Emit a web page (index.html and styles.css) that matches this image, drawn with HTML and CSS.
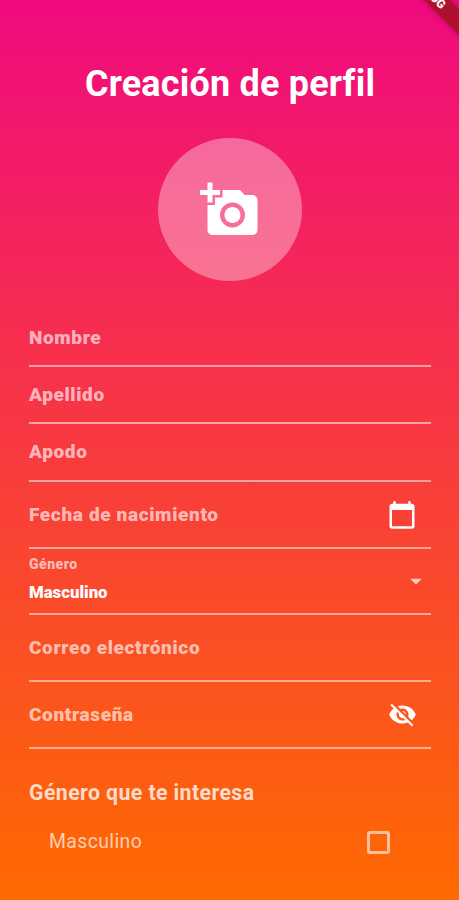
FILE: index.html
```
<!DOCTYPE html>
<html lang="es">
<head>
  <meta charset="UTF-8">
  <meta name="viewport" content="width=device-width, initial-scale=1.0">
  <title>Creación de perfil</title>
  <link rel="stylesheet" href="styles.css">
</head>
<body>
  <div class="banner-corner">
    <div class="debug-banner">DEBUG</div>
  </div>
  <div class="profile-container">
    <h1>Creación de perfil</h1>
    <button type="button" class="photo-button" aria-label="Agregar foto">
      <svg viewBox="0 0 24 24"><path d="M3 4V1h2v3h3v2H5v3H3V6H0V4h3zm3 6V7h3V4h7l1.83 2H21c1.1 0 2 .9 2 2v12c0 1.1-.9 2-2 2H5c-1.1 0-2-.9-2-2V10h3zm7 9c2.76 0 5-2.24 5-5s-2.24-5-5-5-5 2.24-5 5 2.24 5 5 5zm-3.2-5c0 1.77 1.43 3.2 3.2 3.2s3.2-1.43 3.2-3.2-1.43-3.2-3.2-3.2-3.2 1.43-3.2 3.2z"/></svg>
    </button>
    <form class="profile-form">
      <div class="field"><span class="label">Nombre</span></div>
      <div class="field"><span class="label">Apellido</span></div>
      <div class="field"><span class="label">Apodo</span></div>
      <div class="field tall">
        <span class="label">Fecha de nacimiento</span>
        <svg class="icon-calendar" viewBox="0 0 24 24"><path d="M20 3h-1V1h-2v2H7V1H5v2H4c-1.1 0-2 .9-2 2v16c0 1.1.9 2 2 2h16c1.1 0 2-.9 2-2V5c0-1.1-.9-2-2-2zm0 18H4V8h16v13z"/></svg>
      </div>
      <div class="field tall">
        <div class="select">
          <span class="small-label">Género</span>
          <span class="value">Masculino</span>
        </div>
        <svg class="icon-arrow" viewBox="0 0 24 24"><path d="M7 10l5 5 5-5z"/></svg>
      </div>
      <div class="field tall"><span class="label">Correo electrónico</span></div>
      <div class="field tall">
        <span class="label">Contraseña</span>
        <svg class="icon-eye" viewBox="0 0 24 24"><path d="M12 7c2.76 0 5 2.24 5 5 0 .65-.13 1.26-.36 1.83l2.92 2.92c1.51-1.26 2.7-2.89 3.43-4.75-1.73-4.39-6-7.5-11-7.5-1.4 0-2.74.25-3.98.7l2.16 2.16C10.74 7.13 11.35 7 12 7zM2 4.27l2.28 2.28.46.46C3.08 8.3 1.78 10.02 1 12c1.73 4.39 6 7.5 11 7.5 1.55 0 3.03-.3 4.38-.84l.42.42L19.73 22 21 20.73 3.27 3 2 4.27zM7.53 9.8l1.55 1.55c-.05.21-.08.43-.08.65 0 1.66 1.34 3 3 3 .22 0 .44-.03.65-.08l1.55 1.55c-.67.33-1.41.53-2.2.53-2.76 0-5-2.24-5-5 0-.79.2-1.53.53-2.2zm4.31-.78l3.15 3.15.02-.16c0-1.66-1.34-3-3-3l-.17.01z"/></svg>
      </div>
      <h2>Género que te interesa</h2>
      <label class="option">
        <span>Masculino</span>
        <input type="checkbox">
      </label>
    </form>
  </div>
</body>
</html>
```
FILE: styles.css
```
* {
    box-sizing: border-box;
}
body {
    font-family: Roboto, sans-serif;
    margin: 0;
    height: 900px;
    position: relative;
    overflow: hidden;
    color: #fff;
    background: linear-gradient(#f00a7e, #ff6a00);
}
.banner-corner {
    position: absolute;
    top: 0;
    right: 0;
    width: 60px;
    height: 60px;
    overflow: hidden;
}
.debug-banner {
    position: absolute;
    top: -7px;
    right: -40px;
    width: 120px;
    height: 18px;
    padding-right: 25px;
    transform: rotate(45deg);
    background-color: #b01030;
    box-shadow: 0 0 6px rgba(80, 0, 30, 0.4);
    font-size: 12px;
    font-weight: 900;
    line-height: 18px;
    text-align: center;
}
.profile-container {
    display: flex;
    flex-direction: column;
    align-items: center;
    padding: 62px 28px 0 29px;
}
.profile-container h1 {
    margin: 0 0 32px;
    font-size: 36px;
    font-weight: 700;
    font-variant-ligatures: none;
    letter-spacing: 0.2px;
    line-height: 44px;
    white-space: nowrap;
}
.photo-button {
    display: flex;
    align-items: center;
    justify-content: center;
    width: 144px;
    height: 143px;
    padding: 0;
    border: none;
    border-radius: 50%;
    background-color: rgba(255, 255, 255, 0.35);
}
.photo-button svg {
    width: 60px;
    height: 60px;
}
svg {
    display: block;
    fill: #fff;
}
.profile-form {
    width: 100%;
    margin-top: 28.5px;
}
.field {
    display: flex;
    align-items: center;
    justify-content: space-between;
    height: 57.4px;
    border-bottom: 2px solid rgba(255, 255, 255, 0.52);
}
.field.tall {
    height: 66.9px;
}
.label {
    padding-top: 1px;
    font-size: 19px;
    font-weight: 900;
    letter-spacing: 0.65px;
    line-height: 22px;
    color: rgba(255, 255, 255, 0.65);
}
.icon-calendar {
    width: 30px;
    height: 30px;
    margin-top: 2px;
    margin-right: 14px;
}
.icon-arrow {
    width: 28px;
    height: 28px;
    margin-right: 1px;
    opacity: 0.7;
}
.icon-eye {
    width: 29px;
    height: 29px;
    margin-right: 14px;
}
.select {
    display: flex;
    flex-direction: column;
    gap: 10px;
    padding-bottom: 4px;
}
.small-label {
    font-size: 14px;
    font-weight: 900;
    letter-spacing: 0.5px;
    line-height: 16px;
    color: rgba(255, 255, 255, 0.65);
}
.value {
    font-size: 16.8px;
    font-weight: 900;
    line-height: 20px;
}
.profile-form h2 {
    margin: 30.5px 0 0;
    font-size: 21.3px;
    font-weight: 700;
    letter-spacing: 0.4px;
    line-height: 26px;
    color: rgba(255, 255, 255, 0.78);
}
.option {
    display: flex;
    align-items: center;
    justify-content: space-between;
    margin-top: 24.5px;
    padding: 0 41px 0 20px;
    font-size: 19.4px;
    letter-spacing: 0.4px;
    line-height: 24px;
    color: rgba(255, 255, 255, 0.7);
}
.option input {
    appearance: none;
    width: 23px;
    height: 23px;
    margin: 0;
    border: 3px solid rgba(255, 255, 255, 0.6);
    border-radius: 3px;
}
```
